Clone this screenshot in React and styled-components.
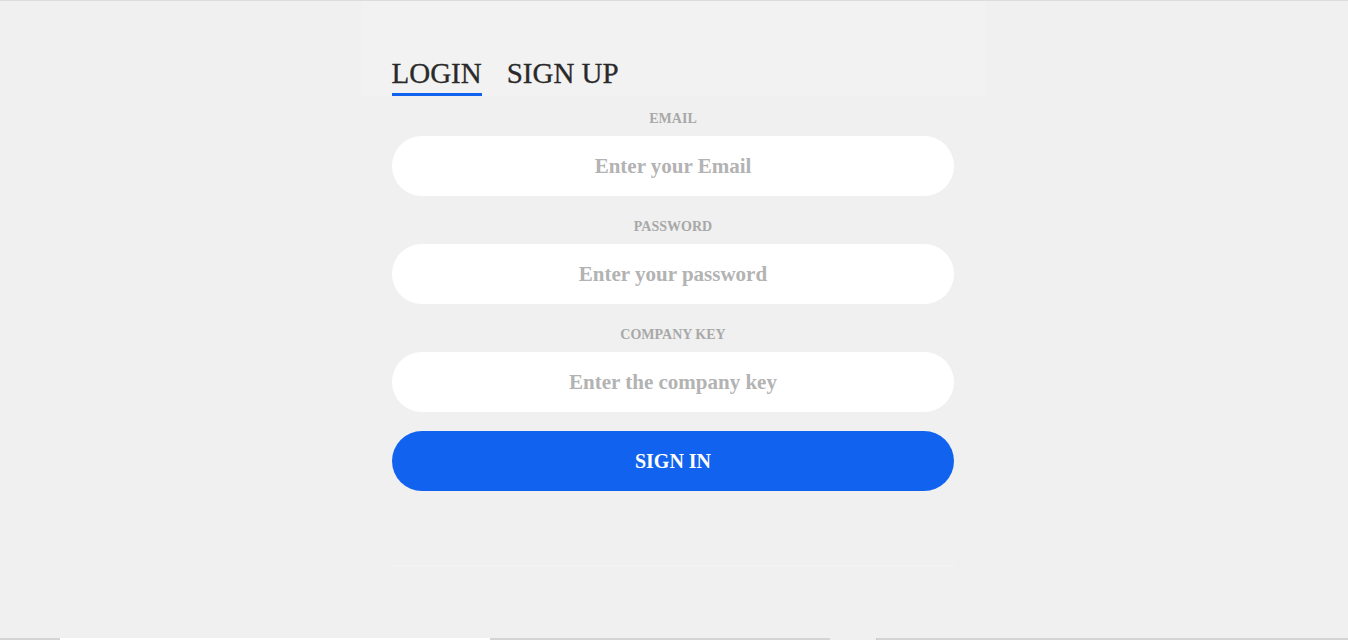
import React from 'react';
import styled, { createGlobalStyle } from 'styled-components';

const GlobalStyle = createGlobalStyle`
  html, body {
    margin: 0;
    padding: 0;
    background: #f0f0f0;
    font-family: "Liberation Serif", "DejaVu Serif", serif;
  }
  *, *::before, *::after {
    box-sizing: border-box;
  }
`;

const Page = styled.div`
  height: 640px;
  border-top: 1px solid #dcdcdc;
  display: flex;
  flex-direction: column;
  align-items: center;
  overflow: hidden;
`;

const Column = styled.div`
  display: flex;
  flex-direction: column;
  align-items: center;
  margin-right: 2px;
`;

const Header = styled.div`
  width: 623px;
  height: 95px;
  background: #f2f2f2;
  display: flex;
  align-items: flex-end;
  padding: 0 30px;
`;

const Tabs = styled.div`
  display: flex;
  gap: 25px;
`;

const Tab = styled.button`
  border: none;
  background: none;
  padding: 0 0 3px;
  font-family: inherit;
  font-size: 29px;
  color: #2a2a2a;
  cursor: pointer;
  border-bottom: 3px solid ${p => (p.$active ? '#1162ee' : 'transparent')};
  -webkit-text-stroke: 0.3px #2a2a2a;
`;

const Form = styled.form`
  width: 562px;
  display: flex;
  flex-direction: column;
  padding-top: 14px;
`;

const Field = styled.div`
  display: flex;
  flex-direction: column;
  align-items: center;
  gap: 8px;
  margin-bottom: 22px;

  &:last-of-type {
    margin-bottom: 19px;
  }
`;

const Label = styled.label`
  font-size: 14px;
  font-weight: bold;
  color: #a8a8a8;
  line-height: 18px;
`;

const Input = styled.input`
  width: 100%;
  height: 60px;
  border: none;
  border-radius: 30px;
  background: #fff;
  text-align: center;
  font-family: inherit;
  font-size: 21px;
  font-weight: bold;
  color: #555;
  outline: none;

  &::placeholder {
    color: #b3b3b3;
  }
`;

const Submit = styled.button`
  width: 100%;
  height: 60px;
  border: none;
  border-radius: 30px;
  background: #1162ee;
  color: #fff;
  font-family: inherit;
  font-size: 20px;
  font-weight: bold;
  cursor: pointer;
`;

const Divider = styled.hr`
  width: 562px;
  margin: 74px 0 0;
  border: none;
  border-top: 2px solid #f3f3f3;
`;

const Footer = styled.div`
  margin-top: auto;
  width: 100%;
  height: 2px;
  display: flex;
`;

const FooterPiece = styled.div`
  width: ${p => p.$w}px;
  flex: ${p => (p.$grow ? 1 : 'none')};
  background: ${p => p.$bg};
  border-left: ${p => (p.$edge ? '1px solid #c8c8c8' : 'none')};
`;

export default function App() {
  return (
    <>
      <GlobalStyle />
      <Page>
        <Column>
          <Header>
            <Tabs>
              <Tab $active>LOGIN</Tab>
              <Tab>SIGN UP</Tab>
            </Tabs>
          </Header>
          <Form onSubmit={e => e.preventDefault()}>
            <Field>
              <Label htmlFor="email">EMAIL</Label>
              <Input id="email" type="email" placeholder="Enter your Email" />
            </Field>
            <Field>
              <Label htmlFor="password">PASSWORD</Label>
              <Input id="password" type="password" placeholder="Enter your password" />
            </Field>
            <Field>
              <Label htmlFor="key">COMPANY KEY</Label>
              <Input id="key" type="text" placeholder="Enter the company key" />
            </Field>
            <Submit type="submit">SIGN IN</Submit>
          </Form>
          <Divider />
        </Column>
        <Footer>
          <FooterPiece $w={60} $bg="#d4d4d4" />
          <FooterPiece $w={430} $bg="#ffffff" />
          <FooterPiece $w={340} $bg="#d4d4d4" />
          <FooterPiece $w={46} $bg="#f0f0f0" />
          <FooterPiece $grow $edge $bg="#d4d4d4" />
        </Footer>
      </Page>
    </>
  );
}
